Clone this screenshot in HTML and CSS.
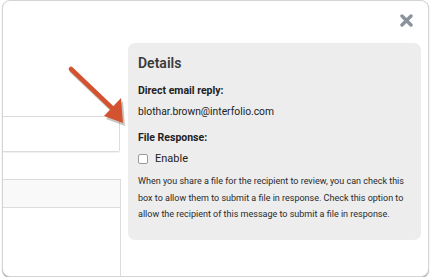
FILE: index.html
```html
<!DOCTYPE html>
<html>
<head>
	<title>Message Details</title>
	<link rel="stylesheet" href="styles.css">
</head>
<body>
	<div class="modal">
		<div class="modal-top">
			<span class="close-btn">
				<svg width="13" height="13" viewBox="0 0 13 13"><path d="M2 2 L11 11 M11 2 L2 11" stroke="#8a929c" stroke-width="3.4" stroke-linecap="round"/></svg>
			</span>
		</div>
		<div class="modal-body">
			<div class="left-col">
				<div class="field"></div>
				<div class="table">
					<div class="table-head"></div>
				</div>
			</div>
			<div class="details">
				<div class="details-title">Details</div>
				<div class="label">Direct email reply:</div>
				<div class="value">blothar.brown@interfolio.com</div>
				<div class="label">File Response:</div>
				<label class="check-row"><span class="checkbox"></span>Enable</label>
				<p class="help">When you share a file for the recipient to review, you can check this box to allow them to submit a file in response. Check this option to allow the recipient of this message to submit a file in response.</p>
			</div>
		</div>
		<!-- callout arrow drawn over the screenshot -->
		<svg class="arrow" width="70" height="70" viewBox="0 0 70 70">
			<line x1="3" y1="3" x2="45" y2="43" stroke="#2a1a10" stroke-opacity="0.25" stroke-width="5" stroke-linecap="round" transform="translate(1 2)"/>
			<path d="M37 51 L54 33 L56 58 Z" fill="#2a1a10" fill-opacity="0.25" transform="translate(1 2)"/>
			<line x1="3" y1="3" x2="45" y2="43" stroke="#d35330" stroke-width="4.5" stroke-linecap="round"/>
			<path d="M36 50 L53 32 L55 57 Z" fill="#d35330"/>
		</svg>
	</div>
</body>
</html>
```

FILE: styles.css
```css
body {
	margin: 0;
	background: #fff;
	font-family: Roboto, 'Liberation Sans', sans-serif;
	color: #333;
}
.modal {
	position: relative;
	box-sizing: border-box;
	margin-left: 2px;
	width: 427px;
	height: 277px;
	border: 1px solid #d4d4d4;
	border-radius: 8px;
	box-shadow: 0 1px 1px rgba(0, 0, 0, 0.35);
	background: #fff;
	overflow: hidden;
}
.modal-top {
	display: flex;
	justify-content: flex-end;
	height: 42px;
	padding-right: 15px;
}
.close-btn {
	display: flex;
	margin-top: 13px;
	height: 13px;
}
.modal-body {
	display: flex;
	gap: 8px;
}
.left-col {
	width: 117px;
	padding-top: 73px;
}
.field {
	height: 34px;
	width: 116px;
	border: 1px solid #dcdcdc;
	border-left: none;
	border-radius: 0 2px 2px 0;
	box-shadow: 0 1px 1px rgba(0, 0, 0, 0.06);
}
.table {
	margin-top: 27px;
	width: 117px;
	height: 120px;
	border: 1px solid #dcdcdc;
	border-left: none;
}
.table-head {
	height: 27px;
	background: #f9f9f9;
	border-bottom: 1px solid #dcdcdc;
}
.details {
	width: 293px;
	box-sizing: border-box;
	height: 197px;
	padding: 12px 10px 0;
	background: #ededed;
	border-radius: 7px;
}
.details-title {
	font-size: 14px;
	font-weight: 600;
	color: #3a3a3a;
	margin-bottom: 13px;
}
.label {
	font-size: 10.5px;
	font-weight: 700;
	color: #222;
	margin-bottom: 8px;
}
.value {
	font-size: 10.3px;
	margin-bottom: 13px;
	color: #222;
}
.check-row {
	display: flex;
	align-items: center;
	gap: 7px;
	font-size: 11px;
	color: #222;
}
.checkbox {
	width: 8px;
	height: 8px;
	border: 1px solid #9a9a9a;
	border-radius: 2px;
	background: #fff;
}
.help {
	margin: 8px 0 0;
	font-size: 9px;
	line-height: 16.7px;
	color: #2a2a2a;
}
.arrow {
	position: absolute;
	left: 65px;
	top: 65px;
}
```
